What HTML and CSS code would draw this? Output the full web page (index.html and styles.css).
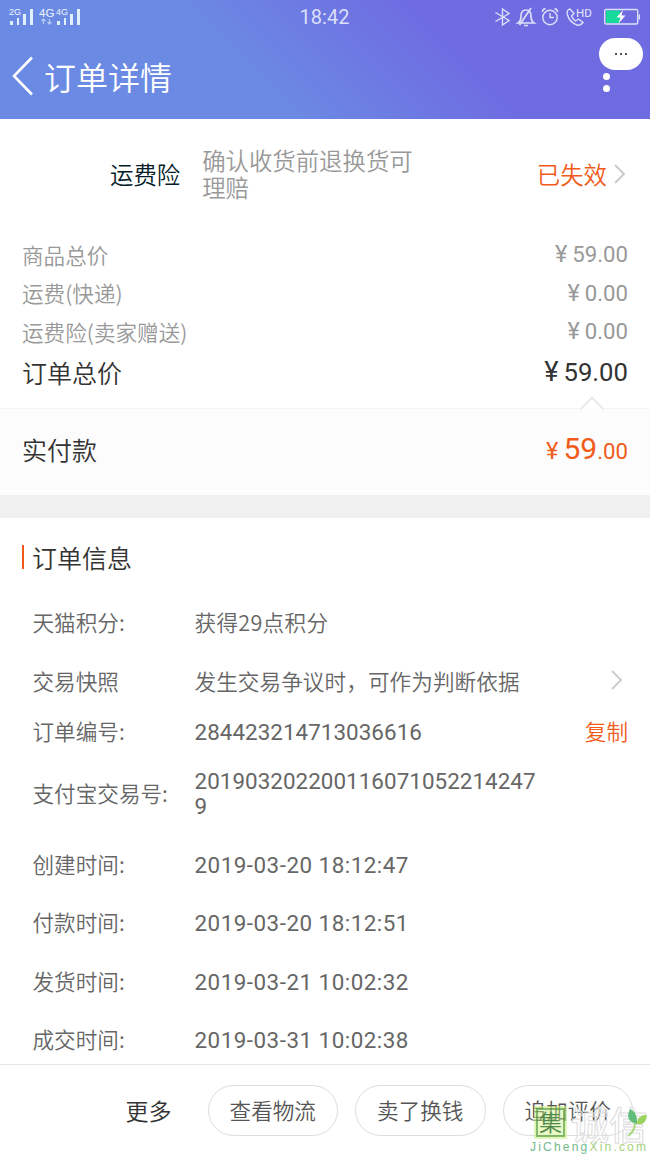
FILE: index.html
```html
<!DOCTYPE html>
<html lang="zh-CN">
<head>
    <meta charset="UTF-8">
    <meta name="viewport" content="width=device-width, initial-scale=1.0">
    <title>订单详情</title>
    <link rel="stylesheet" href="styles.css">
</head>
<body>
    <div class="page">
        <header class="header">
            <div class="status">
                <svg class="signal" width="72" height="20" viewBox="0 0 72 20">
                    <g fill="#dff0fb">
                        <path d="M1 14h3v4H1zM8 11h2v7H8zM14 7h3v11h-3zM21 2h3v16h-3z"/>
                        <path d="M48 14h3v4h-3zM55 11h2v7h-2zM61 7h3v11h-3zM68 2h3v16h-3z"/>
                    </g>
                    <path d="M34.500 17v-5m-2 2 2-2 2 2M40.500 12v5m-2-2 2 2 2-2" fill="none" stroke="#b3c8f2" stroke-width="1.300"/>
                    <text x="0" y="8" class="net">2G</text>
                    <text x="30" y="10" class="net big">4G</text>
                    <text x="47" y="8" class="net">4G</text>
                </svg>
                <span class="clock">18:42</span>
                <svg class="icons" width="150" height="22" viewBox="490 6 150 22">
                    <g fill="none" stroke="#dcdffa" stroke-width="1.400">
                        <path d="M495.500 12.500 509 20.500l-6.500 4.500V9l6.500 4.500-13.500 8"/>
                        <path d="M518 23q3-2 3-7 0-6 5-6t5 6q0 5 3 7zM519.500 25 531 8M524 25.500h4" stroke-width="1.700"/>
                        <circle cx="550" cy="17.500" r="7.200"/>
                        <path d="M550 13v4.500h4M542.500 12q0-3 3-3.500M557.500 12q0-3-3-3.500"/>
                        <path d="M570 9q-4 1-2.500 6 2 7 9.500 10 3.500 1 6-2.500l-4.500-3.500-3 2q-3-2-4-5l2.500-2.500z"/>
                        <rect x="604.700" y="9.500" width="33" height="14.500" rx="1.500"/>
                        <path d="M639.300 14.500v5"/>
                    </g>
                    <path d="M606 10.500h14v12.500h-14z" fill="#17d99a"/>
                    <path d="M623 10 616.500 17.500h4L618.500 23.500l7-8h-4z" fill="#fff"/>
                    <text x="576" y="17" class="hd">HD</text>
                </svg>
            </div>
            <div class="nav">
                <svg width="24" height="40" viewBox="0 0 24 40"><path d="M21 1.500 3 20l18 18.500" fill="none" stroke="#fff" stroke-width="2.600"/></svg>
                <h1>订单详情</h1>
            </div>
            <div class="menu"><i></i><i></i></div>
            <div class="bubble"><i></i><i></i><i></i></div>
        </header>

        <main class="main">
            <div class="insurance">
                <span class="name">运费险</span>
                <span class="desc">确认收货前退换货可理赔</span>
                <span class="state">已失效</span>
                <svg width="14" height="22" viewBox="0 0 14 22"><path d="M2 2l9 9-9 9" fill="none" stroke="#ccc" stroke-width="2"/></svg>
            </div>

            <div class="prices">
                <div class="price"><span>商品总价</span><span class="num"><b>¥</b>59.00</span></div>
                <div class="price"><span>运费(快递)</span><span class="num"><b>¥</b>0.00</span></div>
                <div class="price"><span>运费险(卖家赠送)</span><span class="num"><b>¥</b>0.00</span></div>
                <div class="price total"><span>订单总价</span><span class="num"><b>¥</b>59.00</span></div>
            </div>

            <div class="paid">
                <svg class="notch" width="24" height="14" viewBox="0 0 24 14"><path d="M1 13 12 1.500 23 13" fill="#fff" stroke="#e2e2e2" stroke-width="1.500"/></svg>
                <span>实付款</span>
                <span class="num"><b>¥</b><em>59</em>.00</span>
            </div>

            <div class="info">
                <h2>订单信息</h2>
                <div class="row"><span class="label">天猫积分:</span><span class="value wide">获得29点积分</span></div>
                <div class="row">
                    <span class="label">交易快照</span><span class="value">发生交易争议时，可作为判断依据</span>
                    <svg width="14" height="22" viewBox="0 0 14 22"><path d="M2 2l9 9-9 9" fill="none" stroke="#ccc" stroke-width="2"/></svg>
                </div>
                <div class="row short"><span class="label">订单编号:</span><span class="value digits">284423214713036616</span><span class="copy">复制</span></div>
                <div class="row tall"><span class="label">支付宝交易号:</span><span class="value digits">2019032022001160710522142479</span></div>
                <div class="row"><span class="label">创建时间:</span><span class="value time">2019-03-20 18:12:47</span></div>
                <div class="row"><span class="label">付款时间:</span><span class="value time">2019-03-20 18:12:51</span></div>
                <div class="row"><span class="label">发货时间:</span><span class="value time">2019-03-21 10:02:32</span></div>
                <div class="row"><span class="label">成交时间:</span><span class="value time">2019-03-31 10:02:38</span></div>
            </div>
        </main>

        <footer class="footer">
            <span class="more">更多</span>
            <button>查看物流</button>
            <button>卖了换钱</button>
            <button>追加评价</button>
        </footer>

        <div class="watermark">
            <div class="brand">
                <span class="seal">集</span><span class="outline">诚信</span>
                <svg class="leaf" width="22" height="30" viewBox="0 0 22 30">
                    <path d="M4 1q8 3 7 15Q-2 13 4 1z" fill="#62bd7b"/>
                    <path d="M11 16q0-9 10-9-1 11-10 9z" fill="#9bd45c"/>
                    <path d="M9 15q0 8-7 13" fill="none" stroke="#a5d87a" stroke-width="2"/>
                </svg>
            </div>
            <div class="site"><span>JiCheng</span>Xin.com</div>
        </div>
    </div>
</body>
</html>
```
FILE: styles.css
```css
*{
    box-sizing: border-box;
}
body{
    margin: 0;
    background-color: #fff;
    font-family: "Noto Sans CJK SC", sans-serif;
    font-weight: 350;
    color: #666;
}
h1, h2{
    margin: 0;
    font-weight: 350;
}
b, em, i{
    font-weight: inherit;
    font-style: normal;
}
.page{
    position: relative;
    display: flex;
    flex-direction: column;
    width: 650px;
    height: 1155px;
    overflow: hidden;
}

/* header */
.header{
    position: relative;
    flex: none;
    height: 119px;
    background: linear-gradient(45deg, #6b8ae3 38%, #6f6ce2 68%);
    color: #fff;
}
.status{
    display: flex;
    justify-content: space-between;
    align-items: center;
    height: 34px;
    padding: 0 10px 0 9px;
}
.signal{
    margin-right: 78px;
}
.net{
    font: 9px "Liberation Sans", sans-serif;
    fill: #eef6ff;
}
.net.big{
    font-size: 11.500px;
}
.hd{
    font: 11.5px Roboto, sans-serif;
    fill: #e6e8fc;
}
.clock{
    font: 400 20px Roboto, sans-serif;
    color: #dcdffa;
}
.nav{
    display: flex;
    align-items: center;
    gap: 9px;
    height: 84px;
    padding-left: 11px;
}
.nav h1{
    font-size: 32px;
    line-height: 40px;
}
.menu{
    position: absolute;
    top: 73px;
    left: 603px;
    display: flex;
    flex-direction: column;
    gap: 5px;
}
.menu i{
    width: 7px;
    height: 7px;
    border-radius: 50%;
    background-color: #fff;
}
.bubble{
    position: absolute;
    top: 38px;
    left: 599px;
    display: flex;
    justify-content: center;
    align-items: center;
    gap: 3px;
    width: 44px;
    height: 32px;
    border-radius: 16px;
    background-color: #fff;
}
.bubble i{
    width: 2px;
    height: 2px;
    background-color: #555;
}

/* prices */
.main{
    flex: 1;
    min-height: 0;
    overflow: hidden;
}
.insurance{
    display: flex;
    align-items: center;
    height: 110px;
    padding: 0 23px 1px 110px;
    font-size: 23.4px;
}
.insurance .name{
    color: #051b28;
}
.insurance .desc{
    width: 220px;
    margin-left: 22px;
    font-size: 23.4px;
    line-height: 27px;
    color: #999;
}
.insurance .state{
    margin-left: auto;
    margin-right: 6px;
    color: #f05b1a;
}
.prices{
    height: 179px;
    padding: 6px 22px 0;
}
.price{
    display: flex;
    justify-content: space-between;
    align-items: center;
    height: 38.5px;
    font-size: 21.600px;
    color: #999;
}
.num{
    font-family: Roboto, sans-serif;
    font-weight: 400;
    font-size: 22.2px;
}
.num b{
    margin-right: 5px;
    font-size: 1.06em;
}
.total{
    height: 42px;
    font-size: 25px;
    color: #333;
}
.total .num{
    font-size: 25.700px;
}
.paid{
    position: relative;
    display: flex;
    justify-content: space-between;
    align-items: center;
    height: 87px;
    padding: 0 22px 7px;
    border-top: 1px solid #f5f5f5;
    background-color: #fcfcfc;
    font-size: 25px;
    color: #333;
}
.paid .num{
    color: #f05b1a;
}
.paid em{
    font-size: 30px;
}
.notch{
    position: absolute;
    top: -13px;
    right: 46px;
}

/* order info */
.info{
    border-top: 23px solid #f0f0f0;
    padding: 0 22px;
}
.info h2{
    display: flex;
    align-items: center;
    height: 76px;
    padding-top: 2px;
    font-size: 25px;
    color: #333;
}
.info h2::before{
    content: '';
    width: 2px;
    height: 24px;
    margin-right: 8px;
    background-color: #f05b1a;
}
.row{
    display: flex;
    align-items: center;
    height: 58.400px;
    padding-left: 10.500px;
    font-size: 21.600px;
}
.row.short{
    height: 42px;
}
.row.tall{
    height: 83px;
}
.row svg{
    margin-left: auto;
    margin-right: 4px;
    margin-bottom: 4px;
}
.label{
    width: 162px;
    padding-bottom: 3px;
    white-space: nowrap;
}
.value{
    padding-bottom: 3px;
    letter-spacing: .08px;
    white-space: nowrap;
}
.value.wide{
    letter-spacing: .3px;
}
.value.digits, .value.time{
    padding-bottom: 0;
    font-family: Roboto, sans-serif;
    font-weight: 400;
    font-size: 22.400px;
}
.value.digits{
    letter-spacing: .05px;
}
.value.time{
    letter-spacing: .500px;
}
.tall .digits{
    width: 345px;
    line-height: 25px;
    white-space: normal;
    word-break: break-all;
}
.copy{
    margin-left: auto;
    padding-bottom: 3px;
    color: #f05b1a;
}

/* bottom bar */
.footer{
    display: flex;
    flex: none;
    align-items: center;
    justify-content: flex-end;
    gap: 17px;
    height: 91px;
    padding: 0 17px 0 0;
    border-top: 1px solid #e5e5e5;
    background-color: #fff;
}
.more{
    margin-right: 19px;
    padding-bottom: 1px;
    font-size: 23px;
    color: #333;
}
button{
    width: 130.500px;
    height: 51px;
    padding: 0 0 1px;
    border: 1px solid #ddd;
    border-radius: 26px;
    background-color: #fff;
    font-family: inherit;
    font-size: 21.600px;
    font-weight: 350;
    color: #555;
}

/* watermark */
.watermark{
    position: absolute;
    left: 530px;
    top: 1107px;
    width: 120px;
}
.brand{
    display: flex;
    align-items: center;
    gap: 3px;
}
.seal{
    width: 29px;
    height: 29px;
    margin: 1px 3px 1px 6px;
    border: 2px solid rgba(80, 150, 60, .65);
    outline: 2px solid rgba(204, 240, 130, .6);
    background-color: rgba(204, 240, 130, .45);
    font-size: 23px;
    line-height: 23px;
    text-align: center;
    color: #4f8a4a;
}
.outline{
    font-size: 38px;
    line-height: 31px;
    font-weight: 500;
    color: rgba(255, 255, 255, .35);
    -webkit-text-stroke: 1px #ddd;
}
.leaf{
    position: absolute;
    left: 96px;
    top: 1px;
}
.site{
    margin-top: 2px;
    font: 12px/14px "Liberation Sans", sans-serif;
    letter-spacing: 2.200px;
    white-space: nowrap;
    color: #a6cf7a;
}
.site span{
    color: #72b98c;
}
```
